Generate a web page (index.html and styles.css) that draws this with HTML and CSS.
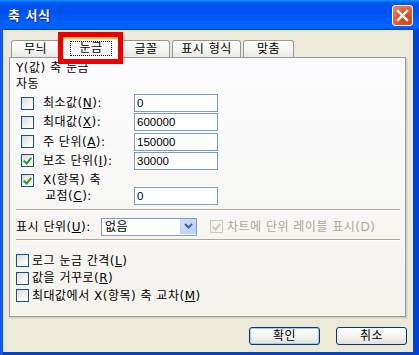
FILE: index.html
```html
<!DOCTYPE html>
<html lang="ko">

<head>
    <meta charset="UTF-8">
    <meta name="viewport" content="width=device-width, initial-scale=1.0">
    <title>축 서식</title>
    <link rel="stylesheet" href="styles.css">
</head>

<body>
    <div class="window">
        <div class="titlebar">
            <span class="title">축 서식</span>
            <span class="close">
                <svg width="13" height="13" viewBox="0 0 13 13">
                    <path d="M2 2 L11 11 M11 2 L2 11" stroke="#fff" stroke-width="2.4" stroke-linecap="square"/>
                </svg>
            </span>
        </div>

        <div class="client">
            <div class="tabs">
                <div class="tab t1">무늬</div>
                <div class="tab t2 active"><span class="focus">눈금</span></div>
                <div class="tab t3">글꼴</div>
                <div class="tab t4">표시 형식</div>
                <div class="tab t5">맞춤</div>
            </div>

            <div class="panel">
                <div class="heading">Y(값) 축 눈금</div>
                <div class="heading">자동</div>

                <div class="scale-rows">
                    <div class="row">
                        <span class="chk"></span>
                        <span class="lbl">최소값(<u>N</u>):</span>
                        <span class="field">0</span>
                    </div>
                    <div class="row">
                        <span class="chk"></span>
                        <span class="lbl">최대값(<u>X</u>):</span>
                        <span class="field">600000</span>
                    </div>
                    <div class="row">
                        <span class="chk"></span>
                        <span class="lbl">주 단위(<u>A</u>):</span>
                        <span class="field">150000</span>
                    </div>
                    <div class="row">
                        <span class="chk on"></span>
                        <span class="lbl">보조 단위(<u>I</u>):</span>
                        <span class="field">30000</span>
                    </div>
                </div>

                <div class="row cross">
                    <span class="chk on"></span>
                    <span class="lbl">X(항목) 축</span>
                </div>
                <div class="row">
                    <span class="lbl point">교점(<u>C</u>):</span>
                    <span class="field">0</span>
                </div>

                <div class="sep"></div>

                <div class="unit-row">
                    <span class="unit-lbl">표시 단위(<u>U</u>):</span>
                    <span class="select">
                        <span class="select-text">없음</span>
                        <span class="select-btn">
                            <svg width="9" height="6" viewBox="0 0 9 6">
                                <path d="M1 1 L4.5 4.5 L8 1" stroke="#4d6185" stroke-width="2" fill="none"/>
                            </svg>
                        </span>
                    </span>
                    <span class="chk on disabled"></span>
                    <span class="muted">차트에 단위 레이블 표시(D)</span>
                </div>

                <div class="sep sep2"></div>

                <div class="opts">
                    <div class="opt"><span class="chk"></span><span>로그 눈금 간격(<u>L</u>)</span></div>
                    <div class="opt"><span class="chk"></span><span>값을 거꾸로(<u>R</u>)</span></div>
                    <div class="opt"><span class="chk"></span><span>최대값에서 X(항목) 축 교차(<u>M</u>)</span></div>
                </div>
            </div>

            <div class="buttons">
                <span class="btn default">확인</span>
                <span class="btn">취소</span>
            </div>
        </div>

        <div class="mark"></div>
    </div>
</body>

</html>
```

FILE: styles.css
```css
body {
    margin: 0;
    padding: 0;
    font-family: "DejaVu Sans", "Noto Sans CJK KR", sans-serif;
    font-size: 12px;
    letter-spacing: 0.5px;
    color: #000;
}

.window {
    position: relative;
    width: 419px;
    height: 355px;
    display: flex;
    flex-direction: column;
    background: linear-gradient(to right, #0a4fe6 0, #1e66f0 2px, #0042d6 3px);
}

.titlebar {
    height: 30px;
    flex: none;
    display: flex;
    align-items: center;
    justify-content: space-between;
    padding: 0 6px 0 8px;
    background: linear-gradient(to bottom, #0997ff 0%, #0053ee 10%, #0050ee 40%, #0066ff 88%, #005bff 94%, #003dd7 100%);
}

.title {
    color: #fff;
    font-weight: bold;
    font-size: 13px;
    line-height: 16px;
    text-shadow: 1px 1px 0 #0a1e8c;
    margin-top: 1px;
}

.close {
    width: 19px;
    height: 19px;
    border: 1px solid #fff;
    border-radius: 3px;
    display: flex;
    align-items: center;
    justify-content: center;
    background: radial-gradient(circle at 70% 75%, #cc4418 0, #e05a2e 50%, #f0906c 100%);
    margin-top: 1px;
}

.client {
    flex: 1;
    margin: 0 6px 3px 3px;
    background: #ece9d8;
    display: flex;
    flex-direction: column;
}

/* tabs */
.tabs {
    display: flex;
    align-items: flex-end;
    height: 20px;
    margin: 7px 0 0 8px;
    position: relative;
    z-index: 2;
}

.tab {
    height: 16px;
    line-height: 16px;
    text-align: center;
    border: 1px solid #919b9c;
    border-bottom: none;
    border-radius: 3px 3px 0 0;
    background: linear-gradient(to bottom, #fefefe 0%, #f4f3ee 60%, #e9e8e2 100%);
    margin-right: 2px;
}

.t1 { width: 47px; }
.t2 { width: 56px; }
.t3 { width: 46px; }
.t4 { width: 67px; }
.t5 { width: 49px; }

.tab.active {
    height: 19px;
    margin: 0 0 -1px -2px;
    padding: 0 2px;
    background: #fcfcfe;
    border-top: 2px solid #ffc83c;
    display: flex;
    align-items: center;
    justify-content: center;
}

.focus {
    border: 1px dotted #000;
    padding: 0 8px;
    line-height: 13px;
}

/* panel */
.panel {
    margin-left: 6px;
    width: 395px;
    height: 256px;
    border: 1px solid #919b9c;
    background: linear-gradient(to bottom, #fcfcfe 0%, #f4f3ee 100%);
    box-shadow: 1px 1px 0 #d0cdbe, 2px 2px 0 #e0ddcd;
    padding-top: 2px;
    display: flex;
    flex-direction: column;
}

.heading {
    line-height: 16px;
    padding-left: 6px;
}

.scale-rows {
    margin-top: 2px;
    display: flex;
    flex-direction: column;
    gap: 1.33px;
}

.row {
    display: flex;
    align-items: center;
    height: 18px;
}

.row .chk {
    margin-left: 11px;
}

.lbl {
    width: 91px;
    margin-left: 9px;
    line-height: 16px;
}

.lbl.point {
    margin-left: 35px;
    width: 89px;
}

.row.cross {
    height: 13px;
    margin-top: 4px;
}

.field {
    width: 80px;
    height: 16px;
    border: 1px solid #7f9db9;
    background: #fff;
    padding-left: 2px;
    line-height: 16px;
    font-family: "Liberation Sans", sans-serif;
    font-size: 11.5px;
    letter-spacing: 0;
}

.chk {
    width: 11px;
    height: 11px;
    flex: none;
    border: 1px solid #1c5180;
    background: linear-gradient(135deg, #dcdcd7 0%, #f4f4f0 60%, #ffffff 100%);
    position: relative;
}

.chk.on::after {
    content: "";
    position: absolute;
    left: 3px;
    top: 1px;
    width: 3px;
    height: 6px;
    border: solid #21a121;
    border-width: 0 2px 2px 0;
    transform: rotate(40deg);
}

.chk.disabled {
    border-color: #cac8bb;
    background: #f4f3ee;
}

.chk.disabled::after {
    border-color: #cac8bb;
}

.sep {
    margin: 4px 5px 0 6px;
    border-top: 1px solid #aca899;
    border-bottom: 1px solid #fff;
    height: 0;
}

.sep2 {
    margin-top: 3px;
}

.unit-row {
    display: flex;
    align-items: center;
    height: 18px;
    margin-top: 7px;
    padding-left: 6px;
}

.unit-lbl {
    width: 85px;
    line-height: 16px;
}

.select {
    width: 94px;
    height: 16px;
    border: 1px solid #7f9db9;
    background: #fff;
    display: flex;
    justify-content: space-between;
    margin-right: 13px;
}

.select-text {
    padding-left: 3px;
    line-height: 16px;
}

.select-btn {
    width: 15px;
    height: 15px;
    margin: 0 0 1px 0;
    border: 1px solid #c3d3fd;
    border-width: 0 0 0 1px;
    background: linear-gradient(135deg, #d2dffb 0%, #b6cdfb 100%);
    display: flex;
    align-items: center;
    justify-content: center;
}

.unit-row .chk {
    margin-right: 4px;
}

.muted {
    color: #aca899;
    line-height: 16px;
}

.opts {
    margin-top: 11px;
    padding-left: 6px;
    display: flex;
    flex-direction: column;
}

.opt {
    height: 17.5px;
    display: flex;
    align-items: center;
    gap: 3px;
    line-height: 16px;
}

/* buttons */
.buttons {
    display: flex;
    justify-content: flex-end;
    gap: 16px;
    margin-top: 10px;
    padding-right: 6px;
}

.btn {
    width: 69px;
    height: 16px;
    line-height: 16px;
    text-align: center;
    border: 1px solid #003c74;
    border-radius: 3px;
    background: linear-gradient(to bottom, #ffffff 0%, #f4f4f0 50%, #e3e2da 100%);
}

.btn.default {
    box-shadow: inset 0 0 0 1px #a9c4f5;
}

/* annotation box around the selected tab */
.mark {
    position: absolute;
    left: 58px;
    top: 32px;
    width: 55px;
    height: 22px;
    border: 5px solid #ee0000;
    z-index: 5;
}
```
